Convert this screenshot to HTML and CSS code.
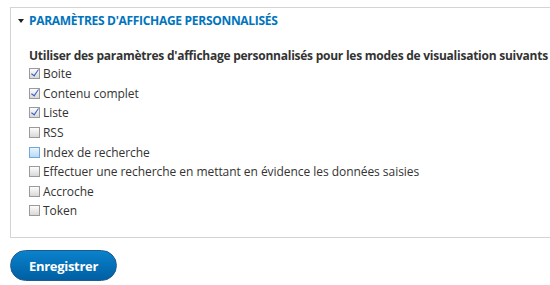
FILE: index.html
```html
<!DOCTYPE html>
<html lang="fr">
<head>
    <meta charset="UTF-8">
    <title>Paramètres d'affichage</title>
    <link rel="stylesheet" href="styles.css">
</head>
<body>

<div class="page">
    <div class="fieldset">
        <div class="legend">
            <span class="arrow"></span>
            <span class="legend-title">Paramètres d'affichage personnalisés</span>
        </div>
        <div class="fieldset-body">
            <div class="group-label">Utiliser des paramètres d'affichage personnalisés pour les modes de visualisation suivants</div>
            <ul class="options">
                <li><span class="box checked"></span>Boite</li>
                <li><span class="box checked"></span>Contenu complet</li>
                <li><span class="box checked"></span>Liste</li>
                <li><span class="box"></span>RSS</li>
                <li><span class="box focus"></span>Index de recherche</li>
                <li><span class="box"></span>Effectuer une recherche en mettant en évidence les données saisies</li>
                <li><span class="box"></span>Accroche</li>
                <li><span class="box"></span>Token</li>
            </ul>
        </div>
    </div>

    <button class="save-btn">Enregistrer</button>
</div>

</body>
</html>
```

FILE: styles.css
```css
body {
    margin: 0;
    padding: 0;
    background: #fff;
    font-family: "Open Sans", "DejaVu Sans", sans-serif;
    color: #333;
    overflow: hidden;
}

.page {
    padding: 7px 0 0 10px;
}

.fieldset {
    width: 580px;
    height: 231px;
    border: 1px solid #d4d4d4;
    box-sizing: border-box;
}

.legend {
    display: flex;
    align-items: center;
    height: 25px;
    padding: 0 0 0 7px;
}

.arrow {
    width: 0;
    height: 0;
    border-left: 3px solid transparent;
    border-right: 3px solid transparent;
    border-top: 4px solid #222;
    margin-right: 5px;
}

.legend-title {
    font-size: 12px;
    font-weight: bold;
    text-transform: uppercase;
    color: #0074bd;
    letter-spacing: -0.3px;
}

.fieldset-body {
    padding: 14px 0 0 18px;
}

.group-label {
    font-size: 12px;
    font-weight: bold;
    white-space: nowrap;
    letter-spacing: -0.25px;
    margin-bottom: 0;
}

.options {
    list-style: none;
    margin: 0;
    padding: 0;
}

.options li {
    display: flex;
    align-items: center;
    height: 19.6px;
    font-size: 12px;
    color: #333;
    letter-spacing: -0.05px;
}

.box {
    width: 9px;
    height: 9px;
    border: 1px solid #9a9a9a;
    background: linear-gradient(#fdfdfd, #d8d8d8);
    margin-right: 3px;
    box-sizing: content-box;
    position: relative;
}

.box.checked::after {
    content: "";
    position: absolute;
    left: 3px;
    top: -1px;
    width: 3px;
    height: 7px;
    border-right: 1.5px solid #3a5fc4;
    border-bottom: 1.5px solid #3a5fc4;
    transform: rotate(35deg);
}

.box.focus {
    border-color: #6fa8dc;
    background: linear-gradient(#eaf4fc, #b8daf4);
}

.save-btn {
    margin-top: 12px;
    width: 107px;
    height: 31px;
    border: 1px solid #1e5c90;
    border-radius: 16px;
    background: linear-gradient(#0a82cc, #005fa2);
    color: #fff;
    font-family: "Open Sans", "DejaVu Sans", sans-serif;
    font-size: 13px;
    font-weight: bold;
    letter-spacing: -0.3px;
    cursor: pointer;
}
```
